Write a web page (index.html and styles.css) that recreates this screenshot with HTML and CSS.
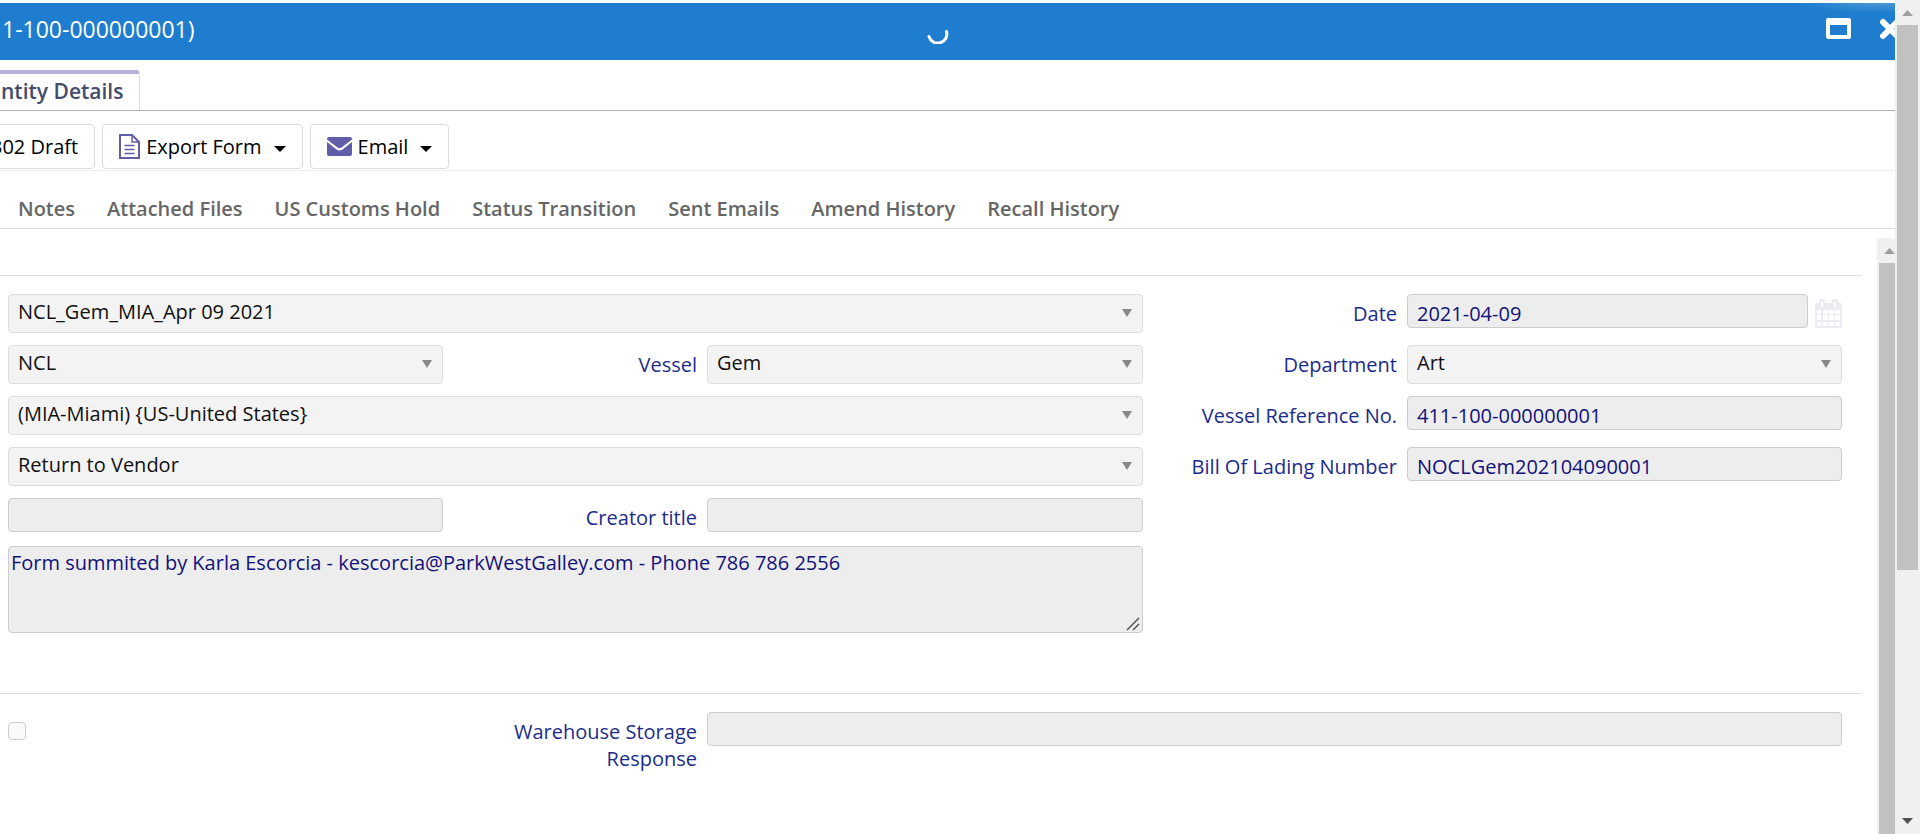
FILE: index.html
```html
<!DOCTYPE html>
<html lang="en">
<head>
<meta charset="utf-8">
<title>Entity Details</title>
<link rel="stylesheet" href="styles.css">
</head>
<body>
<div class="page">
  <main class="window">
    <header class="titlebar">
      <h1 class="title">1-100-000000001)</h1>
      <svg class="spinner" width="22" height="16" viewBox="0 0 22 16" aria-hidden="true"><path d="M2 8.500A9 9 0 0 0 19.500 3.500" fill="none" stroke="#fff" stroke-width="3" stroke-linecap="round"/></svg>
      <div class="controls">
        <button class="control" aria-label="Maximize"><svg width="25" height="21" viewBox="0 0 25 21"><path fill="#fff" fill-rule="evenodd" d="M2 0h21a2 2 0 0 1 2 2v17a2 2 0 0 1-2 2H2a2 2 0 0 1-2-2V2a2 2 0 0 1 2-2zM4 7v10h17V7z"/></svg></button>
        <button class="control" aria-label="Close"><svg width="22" height="22" viewBox="0 0 22 22"><path d="M4 4l14 14M18 4L4 18" stroke="#fff" stroke-width="6" stroke-linecap="round"/></svg></button>
      </div>
    </header>
    <div class="tabs"><a class="tab" href="#">ntity Details</a></div>
    <div class="toolbar">
      <button class="btn btn-first">302 Draft</button>
      <button class="btn"><svg width="21" height="25" viewBox="0 0 21 25" fill="none" stroke="#625da8" stroke-width="2"><path d="M1 1h12l7 7v16H1z" fill="#fff"/><path d="M13 1v7h7M5.500 11.500h10M5.500 15.500h10M5.500 19.500h10" stroke-width="1.500"/></svg><span>Export Form</span><svg class="caret" width="12" height="6" viewBox="0 0 12 6"><path d="M0 0h12L6 6z"/></svg></button>
      <button class="btn"><svg width="25" height="19" viewBox="0 0 25 19" fill="#625da8"><path d="M2 0h21q2 0 2 2v.5L14.500 10.500q-2 1.500-4 0L0 2.500V2q0-2 2-2z"/><path d="M0 5l9.500 7.500q3 2 6 0L25 5v12q0 2-2 2H2q-2 0-2-2z"/></svg><span>Email</span><svg class="caret" width="12" height="6" viewBox="0 0 12 6"><path d="M0 0h12L6 6z"/></svg></button>
    </div>
    <nav class="subtabs">
      <a href="#">Notes</a><a href="#">Attached Files</a><a href="#">US Customs Hold</a><a href="#">Status Transition</a><a href="#">Sent Emails</a><a href="#">Amend History</a><a href="#">Recall History</a>
    </nav>
    <div class="scroller">
      <form class="form">
        <section class="grid">
          <div class="select wide"><select aria-label="Voyage"><option>NCL_Gem_MIA_Apr 09 2021</option></select><svg width="10" height="8" viewBox="0 0 10 8"><path d="M0 0h10L5 8z"/></svg></div>
          <label for="date">Date</label>
          <div class="date"><input id="date" class="field" value="2021-04-09" readonly>
            <svg width="27" height="29" viewBox="0 0 27 29"><path fill="#ebebf3" fill-rule="evenodd" d="M2 4h2V2a2 2 0 0 1 2-2h2a2 2 0 0 1 2 2v2h7V2a2 2 0 0 1 2-2h2a2 2 0 0 1 2 2v2h2a2 2 0 0 1 2 2v21a2 2 0 0 1-2 2H2a2 2 0 0 1-2-2V6a2 2 0 0 1 2-2zM6 3v5h2V3zM19 3v5h2V3zM2 11v4h4v-4zM8 11v4h5v-4zM14 11v4h5v-4zM20 11v4h5v-4zM2 16v5h4v-5zM8 16v5h5v-5zM14 16v5h5v-5zM20 16v5h5v-5zM2 23v4h4v-4zM8 23v4h5v-4zM14 23v4h5v-4zM20 23v4h5v-4z"/></svg></div>

          <div class="select"><select aria-label="Brand"><option>NCL</option></select><svg width="10" height="8" viewBox="0 0 10 8"><path d="M0 0h10L5 8z"/></svg></div>
          <label for="vessel">Vessel</label>
          <div class="select"><select id="vessel"><option>Gem</option></select><svg width="10" height="8" viewBox="0 0 10 8"><path d="M0 0h10L5 8z"/></svg></div>
          <label for="dept">Department</label>
          <div class="select"><select id="dept"><option>Art</option></select><svg width="10" height="8" viewBox="0 0 10 8"><path d="M0 0h10L5 8z"/></svg></div>

          <div class="select wide"><select aria-label="Port"><option>(MIA-Miami) {US-United States}</option></select><svg width="10" height="8" viewBox="0 0 10 8"><path d="M0 0h10L5 8z"/></svg></div>
          <label for="vref">Vessel Reference No.</label>
          <input id="vref" class="field" value="411-100-000000001" readonly>

          <div class="select wide"><select aria-label="Purpose"><option>Return to Vendor</option></select><svg width="10" height="8" viewBox="0 0 10 8"><path d="M0 0h10L5 8z"/></svg></div>
          <label for="bol">Bill Of Lading Number</label>
          <input id="bol" class="field" value="NOCLGem202104090001" readonly>

          <input class="field" aria-label="Creator" readonly>
          <label for="creator">Creator title</label>
          <input id="creator" class="field" readonly>

          <div class="comment wide"><textarea aria-label="Comments" readonly>Form summited by Karla Escorcia - kescorcia@ParkWestGalley.com - Phone 786 786 2556</textarea><svg width="14" height="14" viewBox="0 0 14 14"><path d="M1 13L13 1M7 13l6-6" stroke="#555" stroke-width="1.500"/></svg></div>
        </section>
        <section class="grid">
          <input class="check" type="checkbox" aria-label="Warehouse storage">
          <label for="response">Warehouse Storage Response</label>
          <input id="response" class="field wide" readonly>
        </section>
      </form>
      <div class="inner-bar" aria-hidden="true"><svg width="11" height="6" viewBox="0 0 11 6"><path fill="#a0a0a0" d="M0 6h11L5.500 0z"/></svg><div class="inner-thumb"></div></div>
    </div>
  </main>
  <div class="page-bar" aria-hidden="true">
    <svg width="11" height="6" viewBox="0 0 11 6"><path fill="#a0a0a0" d="M0 6h11L5.500 0z"/></svg>
    <div class="track"><div class="page-thumb"></div></div>
    <svg width="11" height="6" viewBox="0 0 11 6"><path fill="#505050" d="M0 0h11L5.500 6z"/></svg>
  </div>
</div>
</body>
</html>
```
FILE: styles.css
```css
* { box-sizing: border-box; }
body { margin: 0; font: 20px/27px "Open Sans", sans-serif; color: #111; background: #fff; }
button, input, select, textarea { font: inherit; }
svg { display: block; flex: none; }
a { color: inherit; text-decoration: none; }

.page { display: flex; height: 100vh; overflow: hidden; }
.window { flex: 1; min-width: 0; display: flex; flex-direction: column; overflow: hidden; padding-top: 3px; }

.titlebar {
  display: grid; grid-template-columns: 1fr auto 1fr; align-items: center;
  height: 57px; flex: none; padding: 0 0 6px 2px; color: #fff;
  background: radial-gradient(ellipse 80px 10px at calc(100% - 16px) 0, #4a97d8, transparent) #1e7dce;
}
.title { margin: 0; font-size: 23px; line-height: 30px; font-weight: 400; }
.spinner { margin-top: 14px; margin-right: 22px; }
.controls { display: flex; align-items: center; justify-content: flex-end; gap: 28px; margin-right: -6px; }
.control { padding: 0; border: 0; background: none; }

.tabs { flex: none; display: flex; padding-top: 10px; border-bottom: 1px solid #b0b0b0; }
.tab {
  height: 40px; padding: 3px 16px 0 1px; color: #434c6c; font-size: 21px; line-height: 28px; font-weight: 600;
  border-top: 4px solid #b3afdc; border-right: 1px solid #ddd; border-top-right-radius: 4px;
}

.toolbar { flex: none; display: flex; gap: 7px; padding: 13px 0 1px; margin-left: -26px; border-bottom: 1px solid #eee; }
.btn {
  display: flex; align-items: center; gap: 6px; height: 45px; padding: 0 16px;
  color: #000; background: #fff; border: 1px solid #ddd; border-radius: 4px;
}
.caret { margin: 4px 0 0 6px; }

.subtabs { flex: none; display: flex; gap: 32px; padding: 24px 18px 6px; border-bottom: 1px solid #ddd; color: #666; font-weight: 600; }

.scroller { flex: 1; display: flex; min-height: 0; padding-top: 9px; }
.form { flex: 1; min-width: 0; overflow: hidden; padding: 37px 15px 0 0; }
.grid {
  display: grid; grid-template-columns: 435fr 264fr 436fr 264fr 435fr; row-gap: 12px; align-items: start;
  padding: 18px 20px 0 8px; border-top: 1px solid #ddd;
}
.grid + .grid { margin-top: 60px; }
.wide { grid-column: span 3; }
label { padding: 6px 10px 0 0; color: #1c2c8c; text-align: right; }

.select { position: relative; }
.select select {
  display: block; width: 100%; height: 39px; padding: 0 30px 5px 9px; appearance: none;
  color: #111; background: #f3f3f3; border: 1px solid #ddd; border-radius: 4px;
}
.select svg { position: absolute; right: 11px; top: 15px; fill: #888; pointer-events: none; }
.field {
  width: 100%; min-width: 0; height: 34px; padding: 5px 9px 0; color: #12127a;
  background: #ededed; border: 1px solid #ccc; border-radius: 4px;
}
.date { display: flex; align-items: center; gap: 7px; }
.date svg { margin-top: 5px; }
.comment { position: relative; margin-top: 2px; }
.comment textarea {
  display: block; width: 100%; height: 87px; padding: 2px; resize: none; color: #12127a;
  background: #ededed; border: 1px solid #ccc; border-radius: 4px;
}
.comment svg { position: absolute; right: 3px; bottom: 2px; }
.check {
  appearance: none; width: 18px; height: 18px; margin: 10px 0 0;
  background: #fafafa; border: 1px solid #ccc; border-radius: 4px;
}

.inner-bar { flex: none; width: 18px; display: flex; flex-direction: column; align-items: flex-end; gap: 9px; padding-top: 10px; background: #f0f0f0; }
.inner-thumb { flex: 1; width: 16px; background: #c1c1c1; }
.page-bar { flex: none; width: 25px; display: flex; flex-direction: column; align-items: center; gap: 9px; padding: 10px 0; background: #f0f0f0; }
.track { flex: 1; width: 21px; }
.page-thumb { height: 69.5%; background: #c1c1c1; }
```
